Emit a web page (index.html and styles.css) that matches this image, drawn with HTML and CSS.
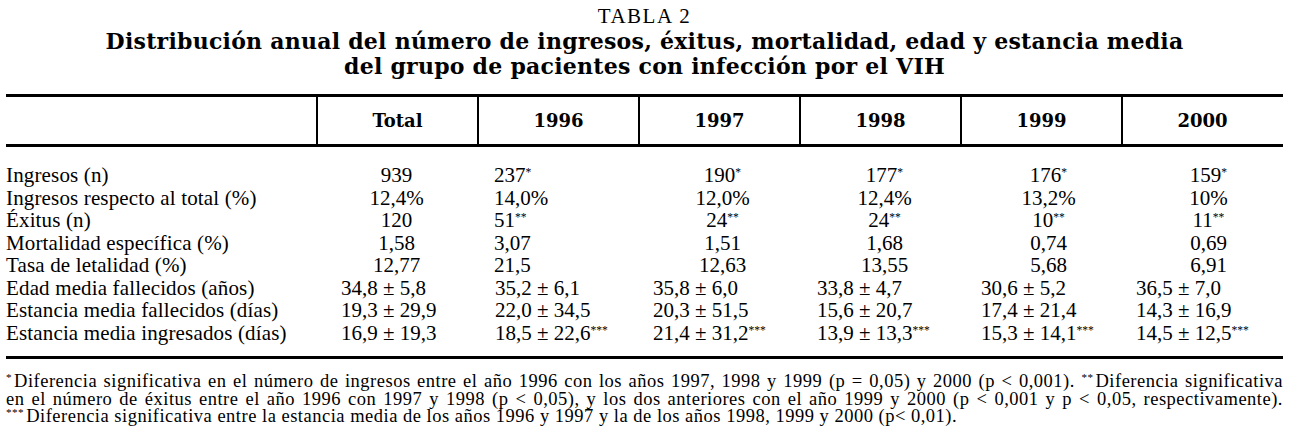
FILE: index.html
```html
<!DOCTYPE html>
<html lang="es">
<head>
<meta charset="utf-8">
<title>Tabla 2</title>
<link rel="stylesheet" href="styles.css">
</head>
<body>
<div class="page">
  <div class="caption">TABLA 2</div>
  <h1 class="title">Distribución anual del número de ingresos, éxitus, mortalidad, edad y estancia media<br>del grupo de pacientes con infección por el VIH</h1>

  <div class="tbl">
    <div class="head">
      <div class="h"></div>
      <div class="h">Total</div>
      <div class="h">1996</div>
      <div class="h">1997</div>
      <div class="h">1998</div>
      <div class="h">1999</div>
      <div class="h">2000</div>
    </div>

    <div class="body">
      <div class="row">
        <div class="lbl">Ingresos (n)</div>
        <div class="v">939</div>
        <div class="v">237<sup>*</sup></div>
        <div class="v">190<sup>*</sup></div>
        <div class="v">177<sup>*</sup></div>
        <div class="v">176<sup>*</sup></div>
        <div class="v">159<sup>*</sup></div>
      </div>
      <div class="row">
        <div class="lbl">Ingresos respecto al total (%)</div>
        <div class="v">12,4%</div>
        <div class="v">14,0%</div>
        <div class="v">12,0%</div>
        <div class="v">12,4%</div>
        <div class="v">13,2%</div>
        <div class="v">10%</div>
      </div>
      <div class="row">
        <div class="lbl">Éxitus (n)</div>
        <div class="v">120</div>
        <div class="v">51<sup>**</sup></div>
        <div class="v">24<sup>**</sup></div>
        <div class="v">24<sup>**</sup></div>
        <div class="v">10<sup>**</sup></div>
        <div class="v">11<sup>**</sup></div>
      </div>
      <div class="row">
        <div class="lbl">Mortalidad específica (%)</div>
        <div class="v">1,58</div>
        <div class="v">3,07</div>
        <div class="v">1,51</div>
        <div class="v">1,68</div>
        <div class="v">0,74</div>
        <div class="v">0,69</div>
      </div>
      <div class="row">
        <div class="lbl">Tasa de letalidad (%)</div>
        <div class="v">12,77</div>
        <div class="v">21,5</div>
        <div class="v">12,63</div>
        <div class="v">13,55</div>
        <div class="v">5,68</div>
        <div class="v">6,91</div>
      </div>
      <div class="row">
        <div class="lbl">Edad media fallecidos (años)</div>
        <div class="pm">34,8 ± 5,8</div>
        <div class="pm">35,2 ± 6,1</div>
        <div class="pm">35,8 ± 6,0</div>
        <div class="pm">33,8 ± 4,7</div>
        <div class="pm">30,6 ± 5,2</div>
        <div class="pm">36,5 ± 7,0</div>
      </div>
      <div class="row">
        <div class="lbl">Estancia media fallecidos (días)</div>
        <div class="pm">19,3 ± 29,9</div>
        <div class="pm">22,0 ± 34,5</div>
        <div class="pm">20,3 ± 51,5</div>
        <div class="pm">15,6 ± 20,7</div>
        <div class="pm">17,4 ± 21,4</div>
        <div class="pm">14,3 ± 16,9</div>
      </div>
      <div class="row">
        <div class="lbl">Estancia media ingresados (días)</div>
        <div class="pm">16,9 ± 19,3</div>
        <div class="pm">18,5 ± 22,6<sup>***</sup></div>
        <div class="pm">21,4 ± 31,2<sup>***</sup></div>
        <div class="pm">13,9 ± 13,3<sup>***</sup></div>
        <div class="pm">15,3 ± 14,1<sup>***</sup></div>
        <div class="pm">14,5 ± 12,5<sup>***</sup></div>
      </div>
    </div>
  </div>

  <div class="notes">
    <p class="line"><sup>*</sup>Diferencia significativa en el número de ingresos entre el año 1996 con los años 1997, 1998 y 1999 (p = 0,05) y 2000 (p &lt; 0,001). <sup>**</sup>Diferencia significativa</p>
    <p class="line">en el número de éxitus entre el año 1996 con 1997 y 1998 (p &lt; 0,05), y los dos anteriores con el año 1999 y 2000 (p &lt; 0,001 y p &lt; 0,05, respectivamente).</p>
    <p class="line last"><sup>***</sup>Diferencia significativa entre la estancia media de los años 1996 y 1997 y la de los años 1998, 1999 y 2000 (p&lt; 0,01).</p>
  </div>
</div>
</body>
</html>
```

FILE: styles.css
```css
html, body {
  margin: 0;
  padding: 0;
  background: #ffffff;
  color: #000000;
}

body {
  font-family: "Liberation Serif", "Times New Roman", serif;
}

.page {
  width: 1277px;
  padding: 4px 11px 0 6px;
}

.caption {
  text-align: center;
  font-size: 21px;
  line-height: 25px;
  letter-spacing: 1.5px;
}

.title {
  margin: 0;
  text-align: center;
  font-family: "DejaVu Serif", serif;
  font-weight: bold;
  font-size: 22px;
  line-height: 25px;
  letter-spacing: 0.25px;
}

.tbl {
  margin-top: 15px;
}

.head {
  display: grid;
  grid-template-columns: 310px repeat(6, 161px);
  height: 47px;
  border-top: 3px solid #000;
  border-bottom: 3px solid #000;
}

.head .h {
  display: flex;
  align-items: center;
  justify-content: center;
  border-left: 2px solid #000;
  font-family: "DejaVu Serif", serif;
  font-weight: bold;
  font-size: 18px;
}

.head .h:first-child {
  border-left: none;
}

.body {
  padding: 17px 0 12px;
  border-bottom: 3px solid #000;
}

.row {
  display: grid;
  grid-template-columns: 310px repeat(6, 161px);
  font-size: 21px;
  line-height: 22.5px;
  white-space: nowrap;
}

.lbl {
  text-align: left;
  letter-spacing: 0.15px;
}

.v {
  text-align: center;
}

.pm {
  text-align: left;
  padding-left: 18px;
}

/* per-column fine alignment of values */
.row .v:nth-child(3) {
  text-align: left;
  padding-left: 17px;
}
.row .v:nth-child(4) {
  padding-left: 8px;
}
.row .v:nth-child(5) {
  padding-left: 10px;
}
.row .v:nth-child(6) {
  padding-left: 16px;
}
.row .v:nth-child(7) {
  padding-left: 14px;
}

.row .pm:nth-child(2) {
  padding-left: 25px;
}
.row .pm:nth-child(4),
.row .pm:nth-child(7) {
  padding-left: 15px;
}
.row .pm:nth-child(6) {
  padding-left: 21px;
}

sup {
  font-size: 0.55em;
  line-height: 0;
  vertical-align: 0.55em;
}

.notes {
  margin-top: 14px;
  font-size: 18.5px;
  line-height: 17.5px;
  letter-spacing: 0.5px;
}

.line {
  margin: 0;
  white-space: nowrap;
  text-align: justify;
  text-align-last: justify;
}

.line.last {
  text-align-last: left;
}

.notes sup {
  font-size: 0.6em;
  vertical-align: 0.5em;
  margin-right: 2px;
}
```
